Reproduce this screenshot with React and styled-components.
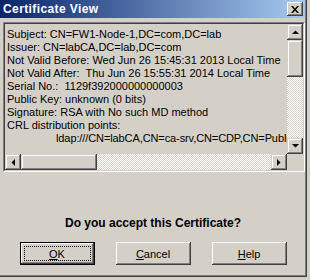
import React from "react";
import styled, { createGlobalStyle } from "styled-components";

const GlobalStyle = createGlobalStyle`
  html, body {
    margin: 0;
    padding: 0;
    background: #d4d0c8;
  }
  body {
    width: 310px;
    height: 280px;
    overflow: hidden;
    font-family: "Liberation Sans", Arial, sans-serif;
  }
`;

const Window = styled.div`
  width: 307px;
  height: 277px;
  box-sizing: border-box;
  background: #d4d0c8;
  border-right: 1px solid #404040;
  border-bottom: 1px solid #404040;
  box-shadow: inset -1px -1px 0 #808080;
  display: flex;
  flex-direction: column;
`;

const TitleBar = styled.div`
  height: 18px;
  margin-right: 1px;
  padding: 0 2px 0 3px;
  display: flex;
  align-items: center;
  justify-content: space-between;
  background: linear-gradient(to right, #0a246a, #a6caf0);
`;

const Title = styled.span`
  color: #fff;
  font-weight: bold;
  font-size: 12px;
  letter-spacing: 0.4px;
`;

const CloseBtn = styled.div`
  width: 16px;
  height: 14px;
  box-sizing: border-box;
  background: #d4d0c8;
  display: flex;
  align-items: center;
  justify-content: center;
  box-shadow: inset -1px -1px 0 #404040, inset 1px 1px 0 #fff,
    inset -2px -2px 0 #808080;
`;

const Body = styled.div`
  flex: 1;
  display: flex;
  flex-direction: column;
  padding: 4px 0 0 3px;
`;

const Field = styled.div`
  width: 302px;
  height: 150px;
  box-sizing: border-box;
  border: 1px solid;
  border-color: #808080 #fff #fff #808080;
`;

const FieldInner = styled.div`
  height: 100%;
  box-sizing: border-box;
  border: 1px solid;
  border-color: #404040 #d4d0c8 #d4d0c8 #404040;
  display: grid;
  grid-template-columns: 1fr 16px;
  grid-template-rows: 1fr 16px;
`;

const TextArea = styled.div`
  overflow: hidden;
  padding: 4px 0 0 2px;
  font-size: 11px;
  line-height: 13px;
  color: #000;
  white-space: pre;
`;

const Line = styled.div`
  padding-left: ${(p) => (p.$indent ? "49px" : "0")};
  letter-spacing: ${(p) => (p.$indent ? "-0.1px" : "0")};
`;

const VScroll = styled.div`
  display: flex;
  flex-direction: column;
`;

const HScroll = styled.div`
  display: flex;
`;

const Raised = styled.div`
  flex: none;
  width: ${(p) => p.$w || 16}px;
  height: ${(p) => p.$h || 16}px;
  box-sizing: border-box;
  background: #d4d0c8;
  display: flex;
  align-items: center;
  justify-content: center;
  box-shadow: inset -1px -1px 0 #404040, inset 1px 1px 0 #d4d0c8,
    inset -2px -2px 0 #808080, inset 2px 2px 0 #fff;
`;

const Track = styled.div`
  flex: 1;
  background: repeating-conic-gradient(#fff 0 25%, #d4d0c8 0 50%) 0 0 / 2px
    2px;
`;

const Corner = styled.div`
  background: #d4d0c8;
`;

const Question = styled.div`
  margin-top: 45px;
  margin-left: -3px;
  text-align: center;
  font-weight: bold;
  font-size: 12px;
  line-height: 13px;
  color: #000;
`;

const ButtonRow = styled.div`
  margin-top: 12px;
  margin-left: -3px;
  display: flex;
  justify-content: center;
  gap: 21px;
`;

const Button = styled.div`
  width: 75px;
  height: 23px;
  box-sizing: border-box;
  position: relative;
  display: flex;
  align-items: center;
  justify-content: center;
  font-size: 11px;
  color: #000;
  background: #d4d0c8;
  border: ${(p) => (p.$default ? "1px solid #000" : "none")};
  box-shadow: inset -1px -1px 0 #404040, inset 1px 1px 0 #fff,
    inset -2px -2px 0 #808080;

  u {
    text-decoration: underline;
  }
`;

const Focus = styled.div`
  position: absolute;
  inset: 3px;
  border: 1px dotted #000;
`;

const Arrow = ({ dir }) => {
  const pts = {
    up: "0,4 7,4 3.5,0.5",
    down: "0,0 7,0 3.5,3.5",
    left: "4,0 4,7 0.5,3.5",
    right: "0,0 0,7 3.5,3.5",
  }[dir];
  const vertical = dir === "up" || dir === "down";
  return (
    <svg width={vertical ? 7 : 4} height={vertical ? 4 : 7}>
      <polygon points={pts} fill="#000" />
    </svg>
  );
};

const lines = [
  "Subject: CN=FW1-Node-1,DC=com,DC=lab",
  "Issuer: CN=labCA,DC=lab,DC=com",
  "Not Valid Before: Wed Jun 26 15:45:31 2013 Local Time",
  "Not Valid After:  Thu Jun 26 15:55:31 2014 Local Time",
  "Serial No.:  1129f392000000000003",
  "Public Key: unknown (0 bits)",
  "Signature: RSA with No such MD method",
  "CRL distribution points:",
];

export default function App() {
  return (
    <>
      <GlobalStyle />
      <Window>
        <TitleBar>
          <Title>Certificate View</Title>
          <CloseBtn>
            <svg width="8" height="7" viewBox="0 0 8 7">
              <path d="M0 0h2l2 2.5L6 0h2L5 3.5 8 7H6L4 4.5 2 7H0l3-3.5z" fill="#000" />
            </svg>
          </CloseBtn>
        </TitleBar>
        <Body>
          <Field>
            <FieldInner>
              <TextArea>
                {lines.map((l) => (
                  <Line key={l}>{l}</Line>
                ))}
                <Line $indent>ldap:///CN=labCA,CN=ca-srv,CN=CDP,CN=Publi</Line>
              </TextArea>
              <VScroll>
                <Raised>
                  <Arrow dir="up" />
                </Raised>
                <Raised $h={37} />
                <Track />
                <Raised>
                  <Arrow dir="down" />
                </Raised>
              </VScroll>
              <HScroll>
                <Raised>
                  <Arrow dir="left" />
                </Raised>
                <Raised $w={76} />
                <Track />
                <Raised>
                  <Arrow dir="right" />
                </Raised>
              </HScroll>
              <Corner />
            </FieldInner>
          </Field>
          <Question>Do you accept this Certificate?</Question>
          <ButtonRow>
            <Button $default>
              <Focus />
              <span>
                <u>O</u>K
              </span>
            </Button>
            <Button>
              <span>
                <u>C</u>ancel
              </span>
            </Button>
            <Button>
              <span>
                <u>H</u>elp
              </span>
            </Button>
          </ButtonRow>
        </Body>
      </Window>
    </>
  );
}
